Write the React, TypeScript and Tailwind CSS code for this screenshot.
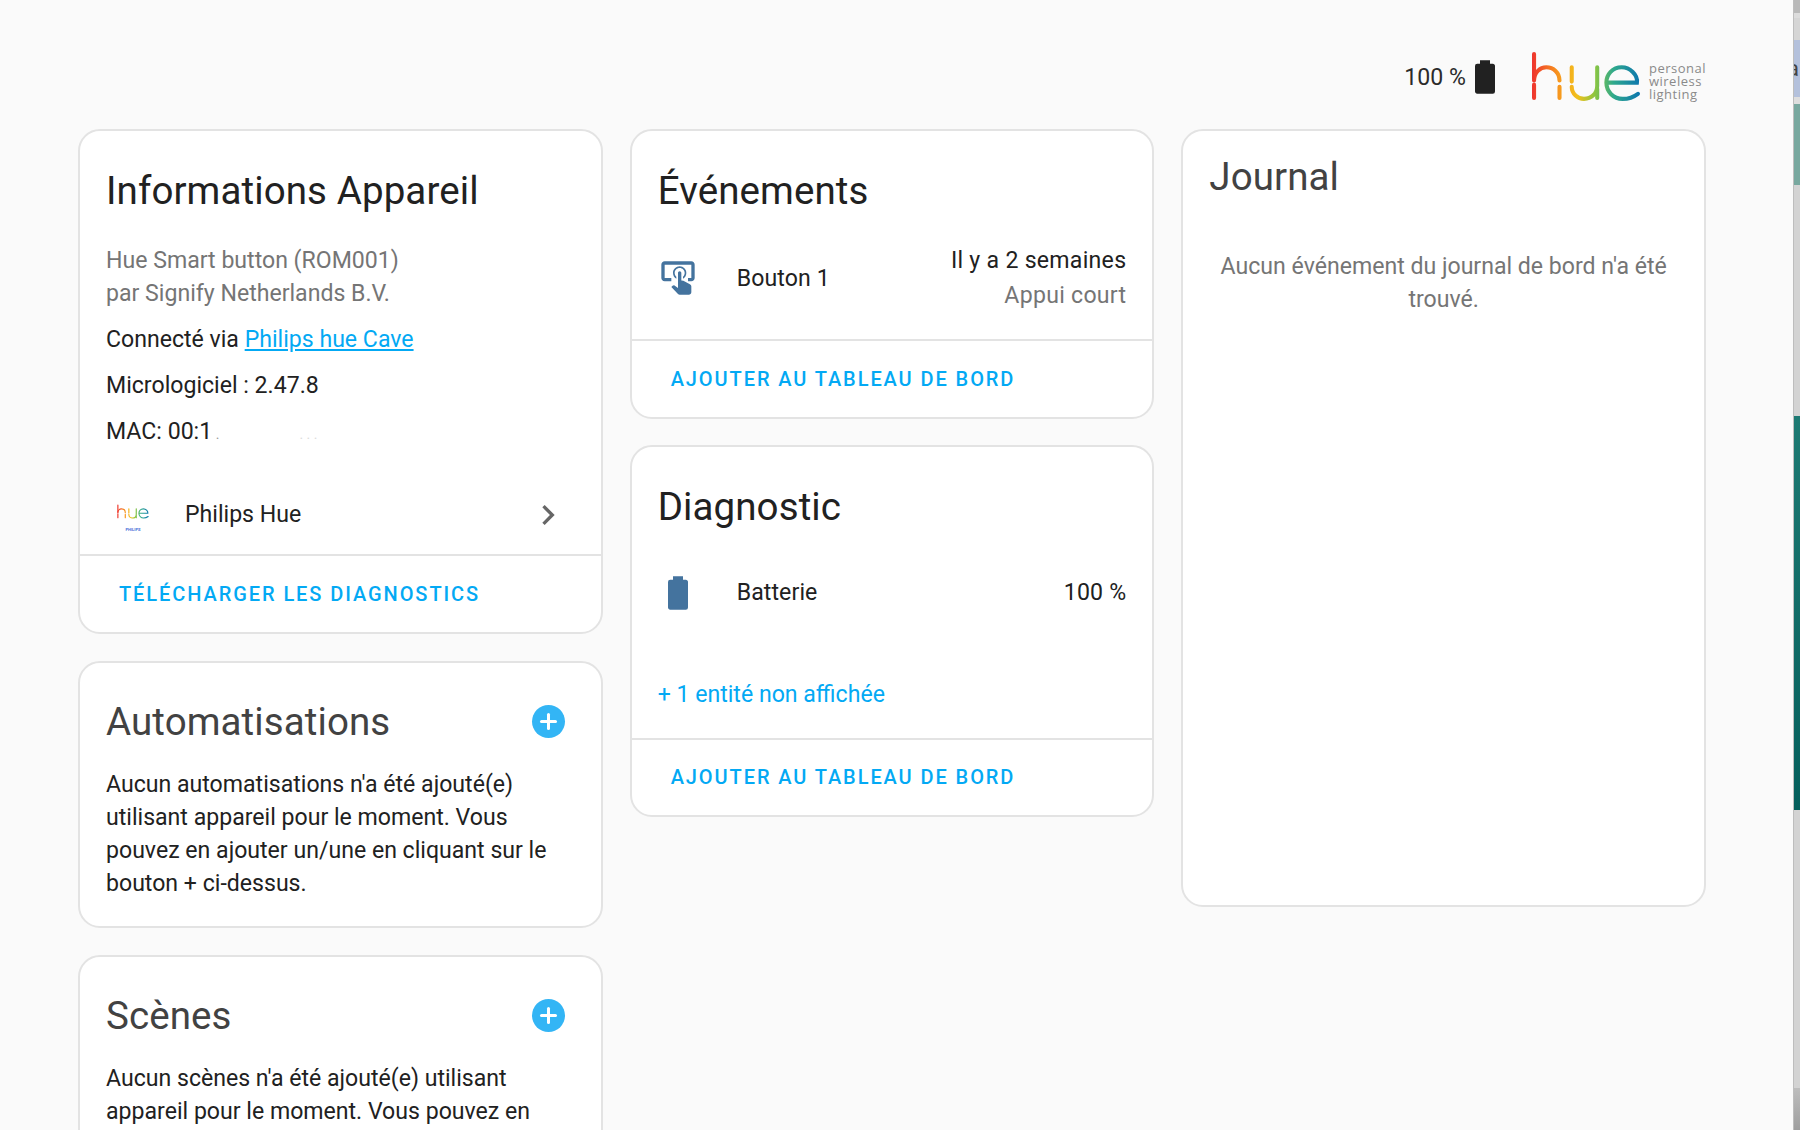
import { ReactNode } from "react";

const tapPath =
  "M13 5C15.21 5 17 6.79 17 9C17 10.5 16.2 11.77 15 12.46V11.24C15.61 10.69 16 9.89 16 9C16 7.34 14.66 6 13 6S10 7.34 10 9C10 9.89 10.39 10.69 11 11.24V12.46C9.8 11.77 9 10.5 9 9C9 6.79 10.79 5 13 5M20 20.5C19.97 21.32 19.32 21.97 18.5 22H13C12.62 22 12.26 21.85 12 21.57L8 17.37L8.74 16.6C8.93 16.39 9.2 16.28 9.5 16.28H9.7L12 18V9C12 8.45 12.45 8 13 8S14 8.45 14 9V13.47L15.21 13.6L19.15 15.79C19.68 16.03 20 16.56 20 17.14V20.5M20 2H4C2.9 2 2 2.9 2 4V12C2 13.11 2.9 14 4 14H8V12L4 12L4 4H20L20 12H18V14H20V13.96L20.04 14C21.13 14 22 13.09 22 12V4C22 2.9 21.11 2 20 2Z";
const batteryPath =
  "M16.67,4H15V2H9V4H7.33A1.33,1.33 0 0,0 6,5.33V20.67C6,21.4 6.6,22 7.33,22H16.67A1.33,1.33 0 0,0 18,20.67V5.33C18,4.6 17.4,4 16.67,4Z";

const Mdi = ({ d, className }: { d: string; className: string }) => (
  <svg viewBox="0 0 24 24" className={className} fill="currentColor">
    <path d={d} />
  </svg>
);

const HueLogo = ({ className, id }: { className: string; id: string }) => (
  <svg viewBox="0 0 108 48" className={className} fill="none" strokeLinecap="round" strokeWidth="4">
    <defs>
      <linearGradient id={id} gradientUnits="userSpaceOnUse" x1="0" y1="0" x2="108" y2="0">
        <stop offset="0" stopColor="#ee2f2f" />
        <stop offset="0.24" stopColor="#f7931e" />
        <stop offset="0.42" stopColor="#f2c01c" />
        <stop offset="0.58" stopColor="#8cc63f" />
        <stop offset="0.75" stopColor="#2fa98c" />
        <stop offset="1" stopColor="#0b74b0" />
      </linearGradient>
    </defs>
    <g stroke={`url(#${id})`}>
      <path d="M3 2V26M3 32V45" />
      <path d="M3 28C3 20 9 15 15 15C22 15 28 20 28 28M28 34V45" />
      <path d="M40 15V29M40 34C40 41 46 46 52 46C59 46 65 41 65 33V15M65 36V45" />
      <path d="M74 30H104C105 22 97 15 89 15C80 15 74 22 74 30C74 39 81 46 90 46C96 46 101 44 105 41" />
    </g>
  </svg>
);

const Card = ({ children, className = "" }: { children: ReactNode; className?: string }) => (
  <div className={`bg-white border-2 border-[#e3e3e3] rounded-[22px] overflow-hidden ${className}`}>{children}</div>
);

const Action = ({ label, className }: { label: string; className: string }) => (
  <div className={`border-t-2 border-[#e3e3e3] flex items-center pl-[39px] text-[#03a9f4] text-[20px] font-medium tracking-[1.92px] ${className}`}>
    {label}
  </div>
);

const PlusTitle = ({ title }: { title: string }) => (
  <div className="h-[60px] flex items-center justify-between pr-[36px]">
    <span className="text-[38.5px] text-[#424242] tracking-[0.1px]">{title}</span>
    <span className="w-[33px] h-[33px] rounded-full bg-[#33b5f5] flex items-center justify-center relative">
      <span className="absolute w-[17px] h-[3px] bg-white rounded-sm" />
      <span className="absolute w-[3px] h-[17px] bg-white rounded-sm" />
    </span>
  </div>
);

export default function App() {
  return (
    <div className="h-[1130px] overflow-hidden flex bg-[#fafafa] text-[#212121] font-['Roboto',sans-serif] text-[23.1px] leading-[33px]">
      <main className="w-[1793px] shrink-0 pl-[78px] pr-[87px]">
        <header className="h-[129px] pt-[50px] flex justify-end items-start">
          <div className="flex items-center h-[54px]">
            <span className="text-[#2b2b2b]">100 %</span>
            <Mdi d={batteryPath} className="w-[40px] h-[40px] -ml-[1px] text-[#212121]" />
            <HueLogo id="hueBig" className="w-[110px] h-[49px] ml-[26px] mb-[1px]" />
            <div className="ml-[8px] mt-[8px] text-[13px] leading-[13px] tracking-[0.5px] text-[#8a8a8a] font-['Open_Sans',sans-serif]">
              personal<br />wireless<br />lighting
            </div>
          </div>
        </header>

        <div className="grid grid-cols-3 gap-[27px] items-start">
          <div className="flex flex-col gap-[27px]">
            <Card>
              <div className="pl-[26px] pr-[26px] pt-[32px]">
                <h1 className="text-[38.5px] leading-[56px] tracking-[0.1px]">Informations Appareil</h1>
                <div className="mt-[25px] text-[#757575]">
                  <div>Hue Smart button (ROM001)</div>
                  <div>par Signify Netherlands B.V.</div>
                </div>
                <div className="mt-[13px]">
                  Connecté via <span className="text-[#03a9f4] underline">Philips hue Cave</span>
                </div>
                <div className="mt-[13px]">Micrologiciel : 2.47.8</div>
                <div className="mt-[13px] h-[33px]">
                  MAC: 00:1<span className="text-[#9a9a9a] text-[14px]"> .</span>
                  <span className="ml-[80px] text-[#dcdcdc] text-[14px]">. . .</span>
                </div>
              </div>
              <div className="h-[106px] pt-[27px] flex items-center pl-[35px] pr-[33px]">
                <div className="w-[36px] mt-[8px] shrink-0 flex flex-col items-center">
                  <HueLogo id="hueSmall" className="w-[32px] h-[15px]" />
                  <span className="text-[4px] leading-[6px] mt-[8px] font-bold text-[#3f6fd8]">PHILIPS</span>
                </div>
                <span className="ml-[34px] flex-1">Philips Hue</span>
                <Mdi d="M8.59,16.58L13.17,12L8.59,7.41L10,6L16,12L10,18L8.59,16.58Z" className="w-[40px] h-[40px] text-[#666]" />
              </div>
              <Action label="TÉLÉCHARGER LES DIAGNOSTICS" className="h-[78px]" />
            </Card>

            <Card>
              <div className="pl-[26px] pt-[28px] pb-[26px]">
                <PlusTitle title="Automatisations" />
                <p className="mt-[17px] pr-[26px]">
                  Aucun automatisations n'a été ajouté(e) utilisant appareil pour le moment. Vous pouvez en ajouter un/une en cliquant sur le bouton + ci-dessus.
                </p>
              </div>
            </Card>

            <Card>
              <div className="pl-[26px] pt-[28px] pb-[26px]">
                <PlusTitle title="Scènes" />
                <p className="mt-[17px] pr-[26px]">
                  Aucun scènes n'a été ajouté(e) utilisant appareil pour le moment. Vous pouvez en ajouter un/une en cliquant sur le bouton + ci-dessus.
                </p>
              </div>
            </Card>
          </div>

          <div className="flex flex-col gap-[26px]">
            <Card>
              <div className="pl-[26px] pr-[26px] pt-[32px]">
                <h2 className="text-[38.5px] leading-[56px] tracking-[0.1px]">Événements</h2>
                <div className="h-[88px] mt-[15px] flex items-center">
                  <Mdi d={tapPath} className="w-[40px] h-[40px] text-[#44739e]" />
                  <span className="ml-[39px] flex-1 tracking-[0.1px]">Bouton 1</span>
                  <div className="text-right tracking-[0.27px]">
                    <div className="leading-[35px]">Il y a 2 semaines</div>
                    <div className="leading-[35px] text-[#757575]">Appui court</div>
                  </div>
                </div>
              </div>
              <Action label="AJOUTER AU TABLEAU DE BORD" className="h-[78px] mt-[17px]" />
            </Card>

            <Card>
              <div className="pl-[26px] pr-[26px] pt-[32px]">
                <h2 className="text-[38.5px] leading-[56px] tracking-[0.1px]">Diagnostic</h2>
                <div className="h-[48px] mt-[33px] flex items-center">
                  <Mdi d={batteryPath} className="w-[40px] h-[40px] mt-[2px] text-[#44739e]" />
                  <span className="ml-[39px] flex-1 tracking-[0.1px]">Batterie</span>
                  <span className="tracking-[0.2px]">100 %</span>
                </div>
                <div className="mt-[62px] text-[#03a9f4]">+ 1 entité non affichée</div>
              </div>
              <Action label="AJOUTER AU TABLEAU DE BORD" className="h-[77px] mt-[27px]" />
            </Card>
          </div>

          <Card className="h-[778px]">
            <div className="pl-[26px] pr-[26px] pt-[18px]">
              <h2 className="text-[38.5px] leading-[56px] tracking-[0.1px] text-[#424242]">Journal</h2>
              <p className="mt-[45px] text-center text-[#757575] px-[6px]">
                Aucun événement du journal de bord n'a été trouvé.
              </p>
            </div>
          </Card>
        </div>
      </main>

      <aside className="w-[7px] shrink-0 flex flex-col border-l border-[#bdbdbd] overflow-hidden">
        <div className="h-[13px] bg-[#b9b9b9]" />
        <div className="h-[5px] bg-[#dcdcdc]" />
        <div className="h-[22px] bg-[#d5d5d5]" />
        <div className="h-[57px] bg-[#b4c1dc] flex items-center text-[#444] text-[22px] leading-none">
          <span className="-ml-[7px]">a</span>
        </div>
        <div className="h-[7px] bg-[#dedede]" />
        <div className="h-[81px] bg-[#78a89f]" />
        <div className="h-[231px] bg-[#d3d3d3]" />
        <div className="h-[394px] bg-gradient-to-b from-[#1d7a73] to-[#045f5c]" />
        <div className="h-[278px] bg-[#d3d3d3]" />
        <div className="flex-1 bg-gradient-to-b from-[#bdbdbd] to-[#9e9e9e]" />
      </aside>
    </div>
  );
}
